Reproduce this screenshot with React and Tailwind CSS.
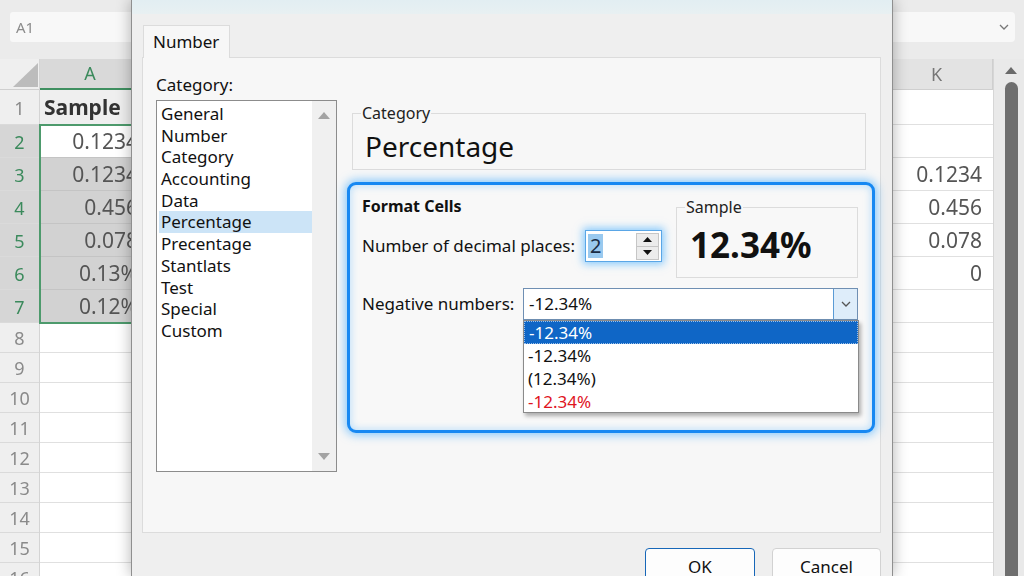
import React from "react";

const categories = [
  "General",
  "Number",
  "Category",
  "Accounting",
  "Data",
  "Percentage",
  "Precentage",
  "Stantlats",
  "Test",
  "Special",
  "Custom",
];

const leftRows = [
  { n: 1, h: "h-[35px]", v: "Sample", kind: "title" },
  { n: 2, h: "h-[33px]", v: "0.1234", kind: "active" },
  { n: 3, h: "h-[33px]", v: "0.1234", kind: "sel" },
  { n: 4, h: "h-[33px]", v: "0.456", kind: "sel" },
  { n: 5, h: "h-[33px]", v: "0.078", kind: "sel" },
  { n: 6, h: "h-[33px]", v: "0.13%", kind: "sel" },
  { n: 7, h: "h-[33px]", v: "0.12%", kind: "sel" },
  { n: 8, h: "h-[30px]", v: "", kind: "" },
  { n: 9, h: "h-[30px]", v: "", kind: "" },
  { n: 10, h: "h-[30px]", v: "", kind: "" },
  { n: 11, h: "h-[30px]", v: "", kind: "" },
  { n: 12, h: "h-[30px]", v: "", kind: "" },
  { n: 13, h: "h-[30px]", v: "", kind: "" },
  { n: 14, h: "h-[30px]", v: "", kind: "" },
  { n: 15, h: "h-[30px]", v: "", kind: "" },
  { n: 16, h: "h-[30px]", v: "", kind: "" },
];

const rightValues = ["", "", "0.1234", "0.456", "0.078", "0", "", "", "", "", "", "", "", "", "", ""];

function Chevron({ className }) {
  return (
    <svg className={className} width="10" height="6" viewBox="0 0 10 6" fill="none">
      <path d="M1 1l4 4 4-4" stroke="currentColor" strokeWidth="1.3" />
    </svg>
  );
}

function Tri({ up, className }) {
  return (
    <svg className={className} width="12" height="7" viewBox="0 0 12 7">
      {up ? <path d="M6 0L12 7H0z" fill="currentColor" /> : <path d="M0 0h12L6 7z" fill="currentColor" />}
    </svg>
  );
}

function LeftSheet() {
  return (
    <div className="w-[131px] shrink-0 overflow-hidden bg-[#ebebeb] blur-[0.5px]">
      <div className="h-[59px] pt-[12px] pl-[10px]">
        <div className="h-[30px] w-[140px] bg-[#f8f8f8] rounded-[3px] flex items-center pl-[6px] text-[15px] text-[#8c8c8c]">
          A1
        </div>
      </div>
      <div className="flex">
        <div className="w-[40px] shrink-0 bg-[#efefef] border-r border-[#d4d4d4]">
          <div className="h-[31px] flex items-end justify-end pr-[1px] pb-[2px] border-b border-[#cfcfcf]">
            <svg width="25" height="24" viewBox="0 0 25 24">
              <path d="M25 0V24H0z" fill="#bcbcbc" />
            </svg>
          </div>
          {leftRows.map((r) => (
            <div
              key={r.n}
              className={`${r.h} flex items-center justify-center pt-[2px] text-[18px] border-b border-[#dadada] ${
                r.kind === "sel" || r.kind === "active"
                  ? "bg-[#d6d6d6] text-[#3b8a5c]"
                  : "text-[#8a8a8a]"
              }`}
            >
              {r.n}
            </div>
          ))}
        </div>
        <div className="w-[100px] shrink-0 bg-white">
          <div className="h-[31px] flex items-center justify-center bg-[#d9d9d9] border-b-2 border-[#3f8f60] text-[18px] text-[#3b8a5c]">
            A
          </div>
          <div className="h-[35px] flex items-center pl-[4px] pt-[2px] bg-[#efefef] border-b border-[#dadada] text-[21px] font-bold text-[#333]">
            Sample
          </div>
          <div className="outline-2 outline-[#4d9a6c] -outline-offset-1">
            {leftRows.slice(1, 7).map((r) => (
              <div
                key={r.n}
                className={`${r.h} flex items-center justify-end pr-[2px] pt-[2px] text-[21px] text-[#555] border-b border-[#c4c4c4] ${
                  r.kind === "active" ? "bg-white" : "bg-[#d2d2d2]"
                }`}
              >
                {r.v}
              </div>
            ))}
          </div>
          {leftRows.slice(7).map((r) => (
            <div key={r.n} className={`${r.h} border-b border-[#e0e0e0] bg-white`} />
          ))}
        </div>
      </div>
    </div>
  );
}

function RightSheet() {
  return (
    <div className="w-[131px] shrink-0 overflow-hidden bg-[#ebebeb] blur-[0.5px]">
      <div className="h-[59px] pt-[12px]">
        <div className="h-[30px] w-[122px] bg-[#f8f8f8] rounded-r-[4px] flex items-center justify-end pr-[6px] text-[#777]">
          <Chevron />
        </div>
      </div>
      <div className="flex">
        <div className="w-[100px] shrink-0 bg-white">
          <div className="h-[31px] flex items-center pl-[38px] bg-[#e3e3e3] border-b border-r border-[#cfcfcf] text-[18px] text-[#777]">
            K
          </div>
          {leftRows.map((r, i) => (
            <div
              key={r.n}
              className={`${r.h} flex items-center justify-end pr-[11px] pt-[2px] text-[21px] text-[#555] border-b border-[#e0e0e0]`}
            >
              {rightValues[i]}
            </div>
          ))}
        </div>
        <div className="flex-1 bg-[#e9e9e9] border-l border-[#d6d6d6] flex flex-col items-center">
          <Tri up className="mt-[8px] ml-[4px] text-[#6a6a6a]" />
          <div className="mt-[8px] ml-[4px] w-[13px] h-[520px] rounded-t-full bg-[#6e6e6e]" />
        </div>
      </div>
    </div>
  );
}

function Dialog() {
  return (
    <div className="relative z-10 w-[762px] shrink-0 flex flex-col bg-[#efefef] border-x border-[#8f8f8f] shadow-[0_0_14px_rgba(0,0,0,0.3)] text-[#111]">
      <div className="shrink-0 h-[14px] bg-linear-to-b from-[#e2eef2] to-[#e8f0f2]" />
      <div className="shrink-0 pl-[10px] pr-[11px] pt-[11px]">
        <div className="flex">
          <div className="relative z-10 -mb-px ml-[1px] h-[33px] w-[87px] bg-[#f7f7f7] border border-b-0 border-[#dcdcdc] flex items-center pl-[9px] text-[17px]">
            Number
          </div>
        </div>
        <div className="h-[476px] bg-[#f7f7f7] border border-[#dcdcdc] flex pl-[13px] pt-[16px]">
          <div className="w-[181px] shrink-0">
            <div className="h-[22px] leading-[22px] text-[17px]">Category:</div>
            <div className="mt-[4px] h-[372px] bg-white border border-[#8c8c8c] flex">
              <div className="flex-1 pt-[2px] pl-[2px]">
                {categories.map((c) => (
                  <div
                    key={c}
                    className={`h-[21.7px] leading-[21.7px] pl-[2px] text-[17px] ${
                      c === "Percentage" ? "bg-[#cce4f7]" : ""
                    }`}
                  >
                    {c}
                  </div>
                ))}
              </div>
              <div className="w-[24px] bg-[#f0f0f0] flex flex-col items-center justify-between py-[11px] text-[#a3a3a3]">
                <Tri up />
                <Tri />
              </div>
            </div>
          </div>
          <div className="ml-[10px] w-[528px] shrink-0 pt-[29px]">
            <fieldset className="ml-[5px] w-[514px] border border-[#dcdcdc] pl-[12px] pt-[5px] pb-[5px]">
              <legend className="ml-[-4px] px-[1px] text-[16px] leading-[20px] text-[#222]">Category</legend>
              <div className="text-[28px] leading-[36px]">Percentage</div>
            </fieldset>
            <div className="mt-[12px] h-[251px] bg-[#f8f8f8] border-[3px] border-[#1788f2] rounded-[9px] shadow-[0_0_10px_2px_rgba(40,160,255,0.55),inset_0_0_8px_rgba(40,160,255,0.35)] pl-[12px] pr-[14px] pt-[11px]">
              <div className="flex justify-between">
                <div>
                  <div className="text-[16px] leading-[20px] font-bold">Format Cells</div>
                  <div className="mt-[14px] flex items-center">
                    <div className="w-[223px] text-[17px]">Number of decimal places:</div>
                    <div className="w-[77px] h-[32px] bg-white border border-[#5aa6e6] shadow-[0_0_8px_2px_rgba(70,175,255,0.65)] flex items-center pl-[2px] pr-[2px]">
                      <div className="flex-1">
                        <span className="inline-block h-[24px] leading-[24px] px-[2px] bg-[#99c9ef] text-[20px] text-[#1a2c44]">
                          2
                        </span>
                      </div>
                      <div className="w-[23px] h-[27px] flex flex-col border border-[#c6c6c6]">
                        <div className="flex-1 flex items-center justify-center bg-[#ececec] border-b border-[#c6c6c6]">
                          <svg width="9" height="5" viewBox="0 0 9 5">
                            <path d="M4.5 0L9 5H0z" fill="#111" />
                          </svg>
                        </div>
                        <div className="flex-1 flex items-center justify-center bg-[#ececec]">
                          <svg width="9" height="5" viewBox="0 0 9 5">
                            <path d="M0 0h9L4.5 5z" fill="#111" />
                          </svg>
                        </div>
                      </div>
                    </div>
                  </div>
                </div>
                <fieldset className="mt-[1px] w-[182px] h-[81px] border border-[#dcdcdc] pl-[13px] pt-[6px]">
                  <legend className="ml-[-5px] px-[1px] text-[16px] leading-[20px] text-[#222]">Sample</legend>
                  <div className="text-[35px] leading-[44px] font-bold">12.34%</div>
                </fieldset>
              </div>
              <div className="mt-[10px] flex items-center">
                <div className="w-[161px] text-[17px]">Negative numbers:</div>
                <div className="relative w-[335px] h-[32px] bg-white border border-[#6f8fb3] flex">
                  <div className="flex-1 flex items-center pl-[5px] text-[17px]">-12.34%</div>
                  <div className="w-[24px] bg-[#deedfa] border-l border-[#5a9bd5] flex items-center justify-center text-[#555]">
                    <Chevron />
                  </div>
                  <div className="absolute left-[-1px] top-full mt-[1px] w-[336px] h-[93px] bg-white border border-[#8a8a8a] shadow-[2px_3px_4px_rgba(0,0,0,0.3)] text-[17px]">
                    <div className="h-[23px] leading-[21px] pl-[4px] bg-[#0f66c6] text-white border border-dotted border-[#9cc0e8]">
                      -12.34%
                    </div>
                    <div className="h-[23px] leading-[23px] pl-[4px]">-12.34%</div>
                    <div className="h-[23px] leading-[23px] pl-[4px]">(12.34%)</div>
                    <div className="h-[23px] leading-[23px] pl-[4px] text-[#e0141e]">-12.34%</div>
                  </div>
                </div>
              </div>
            </div>
          </div>
        </div>
      </div>
      <div className="shrink-0 flex justify-end gap-[17px] pr-[11px] pt-[15px]">
        <button className="w-[110px] h-[36px] bg-[#fdfdfd] border border-[#1767b8] rounded-[4px] text-[17px] pt-[2px]">
          OK
        </button>
        <button className="w-[109px] h-[36px] bg-[#fdfdfd] border border-[#d2d2d2] rounded-[4px] text-[17px] pt-[2px]">
          Cancel
        </button>
      </div>
    </div>
  );
}

export default function App() {
  return (
    <div className="w-[1024px] h-[576px] overflow-hidden flex bg-white font-['Noto_Sans',sans-serif]">
      <LeftSheet />
      <Dialog />
      <RightSheet />
    </div>
  );
}
